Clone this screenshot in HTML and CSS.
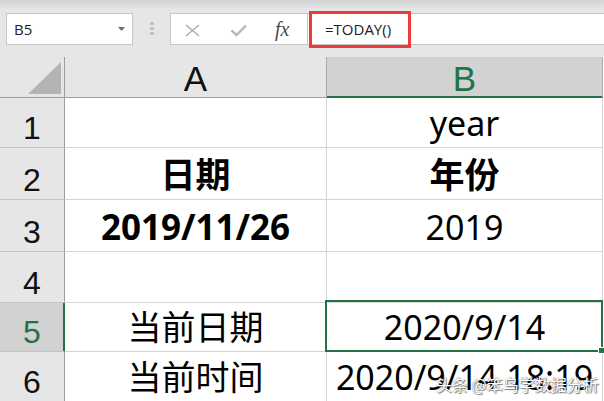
FILE: index.html
```html
<!DOCTYPE html>
<html lang="zh-CN">

<head>
    <meta charset="UTF-8">
    <meta name="viewport" content="width=device-width, initial-scale=1.0">
    <title>TODAY 函数</title>
    <link rel="stylesheet" href="styles.css">
</head>

<body>

    <!-- Barra de fórmulas -->
    <div class="toolbar">
        <div class="name-box">
            <span>B5</span>
            <svg class="drop" width="7" height="4" viewBox="0 0 7 4"><polygon points="0,0 7,0 3.5,4" fill="#6e6e6e"/></svg>
        </div>
        <div class="grip">
            <svg width="4" height="14" viewBox="0 0 4 14">
                <rect x="0" y="0" width="4" height="3" fill="#c2c2c2"/>
                <rect x="0" y="5" width="4" height="3" fill="#c2c2c2"/>
                <rect x="0" y="10" width="4" height="3" fill="#c2c2c2"/>
            </svg>
        </div>
        <div class="fx-tools">
            <svg class="icon-cancel" width="15" height="13" viewBox="0 0 15 13">
                <path d="M1 1 L14 12 M14 1 L1 12" stroke="#acacac" stroke-width="1.4" fill="none"/>
            </svg>
            <svg class="icon-enter" width="17" height="13" viewBox="0 0 17 13">
                <path d="M1.5 6.5 L6.5 11 L16 1.5" stroke="#b8b8b8" stroke-width="2.4" fill="none"/>
            </svg>
            <span class="fx">fx</span>
        </div>
        <div class="formula">
            <span class="formula-text">=TODAY()</span>
            <span class="highlight"></span>
        </div>
    </div>

    <!-- Hoja -->
    <div class="sheet">
        <div class="corner">
            <svg width="33" height="32" viewBox="0 0 33 32"><polygon points="33,0 33,32 0,32" fill="#b4b4b4"/></svg>
        </div>
        <div class="col-head">A</div>
        <div class="col-head active">B</div>

        <div class="row-head">1</div>
        <div class="cell"></div>
        <div class="cell">year</div>

        <div class="row-head">2</div>
        <div class="cell bold">日期</div>
        <div class="cell bold">年份</div>

        <div class="row-head">3</div>
        <div class="cell bold">2019/11/26</div>
        <div class="cell">2019</div>

        <div class="row-head">4</div>
        <div class="cell"></div>
        <div class="cell"></div>

        <div class="row-head active">5</div>
        <div class="cell">当前日期</div>
        <div class="cell selected">2020/9/14<span class="fill-handle"></span></div>

        <div class="row-head">6</div>
        <div class="cell">当前时间</div>
        <div class="cell">2020/9/14 18:19</div>
    </div>

    <div class="watermark">头条 @笨鸟学数据分析</div>

</body>

</html>
```

FILE: styles.css
```css
/* Estilos generales */
body {
    margin: 0;
    width: 604px;
    height: 401px;
    overflow: hidden;
    background-color: #ffffff;
    color: #000;
    position: relative;
}

/* Barra de fórmulas */
.toolbar {
    display: flex;
    align-items: flex-start;
    height: 57px;
    box-sizing: border-box;
    padding: 13px 0 0 6px;
    background: linear-gradient(#d2d2d2, #e6e6e6 9px);
    font-family: "Open Sans", "Noto Sans", sans-serif;
    color: #222;
}

.name-box {
    width: 127px;
    height: 32px;
    box-sizing: border-box;
    border: 1px solid #c6c6c6;
    background-color: #fff;
    display: flex;
    align-items: center;
    justify-content: space-between;
    padding: 0 7px 0 7px;
    font-size: 15px;
    line-height: 30px;
}

.grip {
    margin: 9px 0 0 17px;
    line-height: 0;
}

.fx-tools {
    margin-left: 16px;
    width: 137px;
    height: 32px;
    box-sizing: border-box;
    border: 1px solid #c6c6c6;
    border-right: none;
    background-color: #fff;
    display: flex;
    align-items: center;
    padding: 2px 0 0 14px;
}

.icon-enter {
    margin-left: 30px;
}

.fx {
    margin-left: 28px;
    font-family: "Liberation Serif", serif;
    font-style: italic;
    font-size: 20px;
    color: #4a4a4a;
    line-height: 20px;
    margin-top: -3px;
}

.formula {
    flex: 1;
    height: 32px;
    box-sizing: border-box;
    border: 1px solid #c6c6c6;
    border-right: none;
    background-color: #fff;
    position: relative;
    padding-left: 17px;
    font-size: 15px;
    line-height: 30px;
}

.highlight {
    position: absolute;
    left: 1px;
    top: -3px;
    width: 102px;
    height: 37px;
    box-sizing: border-box;
    border: 3px solid #f03a3a;
}

/* Cuadrícula */
.sheet {
    display: grid;
    grid-template-columns: 65px 262px 276px;
    grid-template-rows: 41px 50px 52px 52px 51px 49px 50px;
}

.corner,
.col-head,
.row-head {
    background-color: #e6e6e6;
    box-sizing: border-box;
    border-right: 1px solid #ababab;
    border-bottom: 1px solid #ababab;
    display: flex;
    justify-content: center;
    align-items: flex-end;
    font-family: "Liberation Sans", Arial, sans-serif;
    color: #111;
}

.corner {
    justify-content: flex-end;
    padding: 0 3px 3px 0;
    border-right-color: #9d9d9d;
    border-bottom-color: #9d9d9d;
}

.col-head {
    font-size: 35px;
    line-height: 36px;
    border-bottom-color: #9d9d9d;
}

.col-head.active {
    background-color: #d2d2d2;
    color: #217346;
    border-bottom-color: #217346;
    box-shadow: inset 0 -1px 0 #217346;
}

.row-head {
    font-size: 32px;
    line-height: 36px;
    padding-bottom: 1px;
    border-bottom-color: #c4c4c4;
    border-right-color: #9d9d9d;
}

.row-head.active {
    background-color: #d2d2d2;
    color: #217346;
    border-right-color: #217346;
    box-shadow: inset -1px 0 0 #217346;
}

.cell {
    box-sizing: border-box;
    border-right: 1px solid #d4d4d4;
    border-bottom: 1px solid #d4d4d4;
    display: flex;
    justify-content: center;
    align-items: flex-end;
    padding-bottom: 1px;
    font-family: "Noto Sans", "Noto Sans CJK SC", sans-serif;
    font-size: 34px;
    line-height: 46px;
    white-space: nowrap;
    position: relative;
}

.cell.bold {
    font-weight: bold;
    font-size: 35px;
}

.cell.selected::after {
    content: "";
    position: absolute;
    left: -2px;
    top: -3px;
    right: -1px;
    bottom: -1px;
    border: 2px solid #217346;
}

.fill-handle {
    position: absolute;
    right: -3px;
    bottom: -3px;
    width: 5px;
    height: 5px;
    background-color: #217346;
    border: 1px solid #fff;
    z-index: 1;
}

/* Marca de agua */
.watermark {
    position: absolute;
    left: 436px;
    top: 372px;
    font-family: "Noto Sans CJK SC", sans-serif;
    font-size: 16px;
    color: #fff;
    text-shadow: 0 0 1px #444, 1px 1px 1px rgba(0, 0, 0, 0.5);
    white-space: nowrap;
}
```
